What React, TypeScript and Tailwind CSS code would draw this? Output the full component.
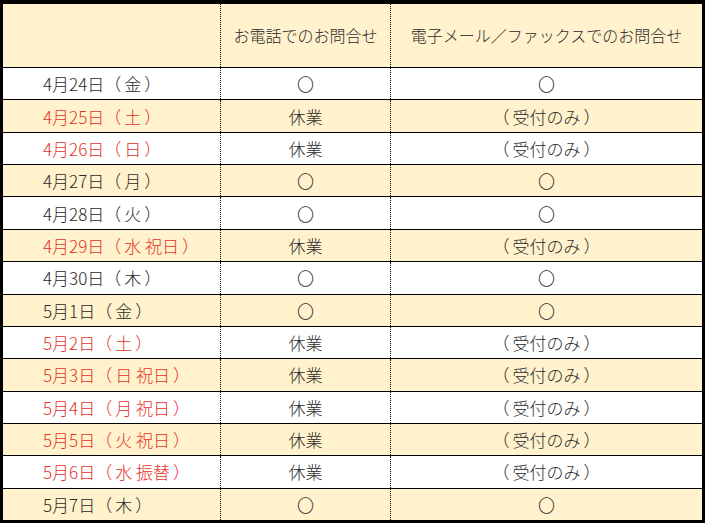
import React from "react";

type Row = { date: string; red: boolean; phone: string; mail: string };

const rows: Row[] = [
  { date: "4月24日（金）", red: false, phone: "〇", mail: "〇" },
  { date: "4月25日（土）", red: true, phone: "休業", mail: "（受付のみ）" },
  { date: "4月26日（日）", red: true, phone: "休業", mail: "（受付のみ）" },
  { date: "4月27日（月）", red: false, phone: "〇", mail: "〇" },
  { date: "4月28日（火）", red: false, phone: "〇", mail: "〇" },
  { date: "4月29日（水 祝日）", red: true, phone: "休業", mail: "（受付のみ）" },
  { date: "4月30日（木）", red: false, phone: "〇", mail: "〇" },
  { date: "5月1日（金）", red: false, phone: "〇", mail: "〇" },
  { date: "5月2日（土）", red: true, phone: "休業", mail: "（受付のみ）" },
  { date: "5月3日（日 祝日）", red: true, phone: "休業", mail: "（受付のみ）" },
  { date: "5月4日（月 祝日）", red: true, phone: "休業", mail: "（受付のみ）" },
  { date: "5月5日（火 祝日）", red: true, phone: "休業", mail: "（受付のみ）" },
  { date: "5月6日（水 振替）", red: true, phone: "休業", mail: "（受付のみ）" },
  { date: "5月7日（木）", red: false, phone: "〇", mail: "〇" },
];

function FW({ text }: { text: string }) {
  const parts = text.split(/([（）])/).filter((p) => p !== "");
  return (
    <span className="whitespace-nowrap">
      {parts.map((p, i) =>
        p === "（" ? (
          <span key={i} className="mr-[3px]">
            （
          </span>
        ) : p === "）" ? (
          <span key={i} className="ml-[3px]">
            ）
          </span>
        ) : (
          <span key={i}>{p}</span>
        )
      )}
    </span>
  );
}

export default function App() {
  return (
    <div
      className="w-[707px] h-[525px] bg-white text-[#2a2a2a] text-[17px] leading-none font-light"
      style={{ fontFamily: '"Noto Sans CJK JP", "Noto Sans", sans-serif' }}
    >
      <div className="w-[705px] h-[523px] border-l-[3px] border-t-4 border-r-[3px] border-b-[3px] border-black flex flex-col">
        <div className="flex h-[64px] shrink-0 bg-[#fff2cc] border-b border-black text-[16px]">
          <div className="w-[218px] border-r border-dotted border-black" />
          <div className="w-[170px] border-r border-dotted border-black flex items-center justify-center pb-[2px]">
            お電話でのお問合せ
          </div>
          <div className="flex-1 flex items-center justify-center pb-[2px]">
            電子メール／ファックスでのお問合せ
          </div>
        </div>
        {rows.map((r, i) => (
          <div
            key={i}
            className={`flex flex-1 ${i % 2 === 1 ? "bg-[#fff2cc]" : "bg-white"} ${
              i < rows.length - 1 ? "border-b border-black" : ""
            }`}
          >
            <div
              className={`w-[218px] border-r border-dotted border-black flex items-center pl-10 ${
                r.red ? "text-[#e5332a]" : ""
              }`}
            >
              <FW text={r.date} />
            </div>
            <div className="w-[170px] border-r border-dotted border-black flex items-center justify-center">
              {r.phone}
            </div>
            <div className="flex-1 flex items-center justify-center">
              <FW text={r.mail} />
            </div>
          </div>
        ))}
      </div>
    </div>
  );
}
